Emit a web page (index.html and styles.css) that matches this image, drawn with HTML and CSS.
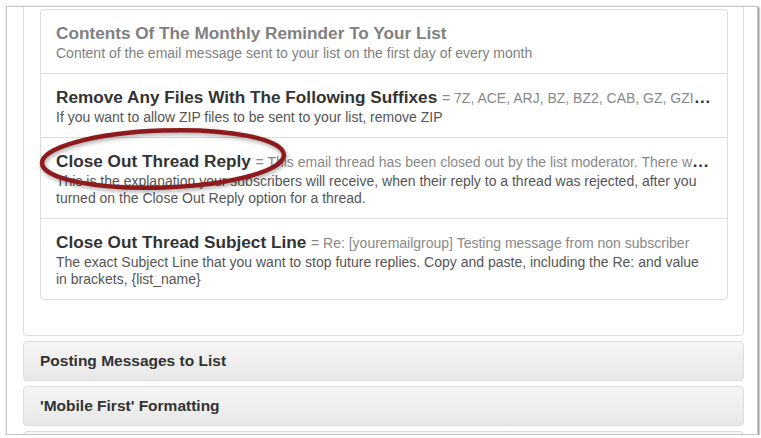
FILE: index.html
```html
<!DOCTYPE html>
<html>
<head>
<meta charset="utf-8">
<link rel="stylesheet" href="styles.css">
</head>
<body>
<div class="frame">
  <div class="page">
    <div class="panel">
      <div class="panel-body">
        <div class="list">
          <div class="item muted">
            <h4 class="item-title">Contents Of The Monthly Reminder To Your List</h4>
            <p class="item-desc">Content of the email message sent to your list on the first day of every month</p>
          </div>
          <div class="item">
            <h4 class="item-title">Remove Any Files With The Following Suffixes <span class="value">= 7Z, ACE, ARJ, BZ, BZ2, CAB, GZ, GZIP, HQX, LHA, LZH, RAR, SIT, TAR, TGZ, ZIP</span></h4>
            <p class="item-desc">If you want to allow ZIP files to be sent to your list, remove ZIP</p>
          </div>
          <div class="item">
            <h4 class="item-title">Close Out Thread Reply <span class="value">= This email thread has been closed out by the list moderator. There will be no further replies accepted.</span></h4>
            <p class="item-desc">This is the explanation your subscribers will receive, when their reply to a thread was rejected, after you turned on the Close Out Reply option for a thread.</p>
          </div>
          <div class="item">
            <h4 class="item-title">Close Out Thread Subject Line <span class="value">= Re: [youremailgroup] Testing message from non subscriber</span></h4>
            <p class="item-desc">The exact Subject Line that you want to stop future replies. Copy and paste, including the Re: and value in brackets, {list_name}</p>
          </div>
        </div>
      </div>
    </div>
    <div class="acc-head">Posting Messages to List</div>
    <div class="acc-head">'Mobile First' Formatting</div>
    <div class="acc-head">Advanced Settings</div>
  </div>
  <svg class="annot" width="761" height="438" viewBox="0 0 761 438">
    <ellipse cx="163" cy="159" rx="121" ry="28.5" transform="rotate(-2 163 159)" fill="none" stroke="#8e1a1d" stroke-width="4.5"/>
  </svg>
</div>
</body>
</html>
```

FILE: styles.css
```css
html, body {
  margin: 0;
  padding: 0;
  background: #ffffff;
}

.frame {
  position: relative;
  margin: 6px 0 0 6px;
  width: 750px;
  height: 427px;
  border: 1px solid #c4c4c4;
  box-shadow: 1px 1px 2px rgba(0, 0, 0, 0.55);
  overflow: hidden;
  background: #fff;
  font-family: "Liberation Sans", Arial, sans-serif;
  color: #333;
}

.page {
  padding: 0 13px 0 16px;
}

.panel {
  margin-top: -14px;
  border: 1px solid #dddddd;
  border-radius: 4px;
  background: #fff;
}

.panel-body {
  padding: 15px 15px 15px 16px;
}

.list {
  border: 1px solid #dddddd;
  border-radius: 4px;
  margin-bottom: 20px;
}

.item {
  padding: 11px 15px 11px 15px;
}

.item + .item {
  border-top: 1px solid #dddddd;
}

.item-title {
  margin: 0;
  height: 24px;
  font-size: 17.2px;
  line-height: 24px;
  font-weight: bold;
  color: #333;
  white-space: nowrap;
  overflow: hidden;
  text-overflow: ellipsis;
}

.value {
  font-size: 14px;
  line-height: 1;
  font-weight: normal;
  color: #888;
}

.item-desc {
  margin: 0;
  font-size: 14px;
  line-height: 17px;
  color: #555;
}

.muted .item-title,
.muted .item-desc {
  color: #808080;
}

.acc-head {
  margin-top: 5px;
  height: 38px;
  box-sizing: content-box;
  padding: 0 16px;
  display: flex;
  align-items: center;
  border: 1px solid #dddddd;
  border-radius: 4px;
  background: linear-gradient(to bottom, #f5f5f5, #e8e8e8);
  font-size: 15.5px;
  font-weight: bold;
  color: #333;
}

.annot {
  position: absolute;
  left: -7px;
  top: -7px;
  pointer-events: none;
  filter: drop-shadow(1px 2px 2px rgba(0, 0, 0, 0.35));
}
```
